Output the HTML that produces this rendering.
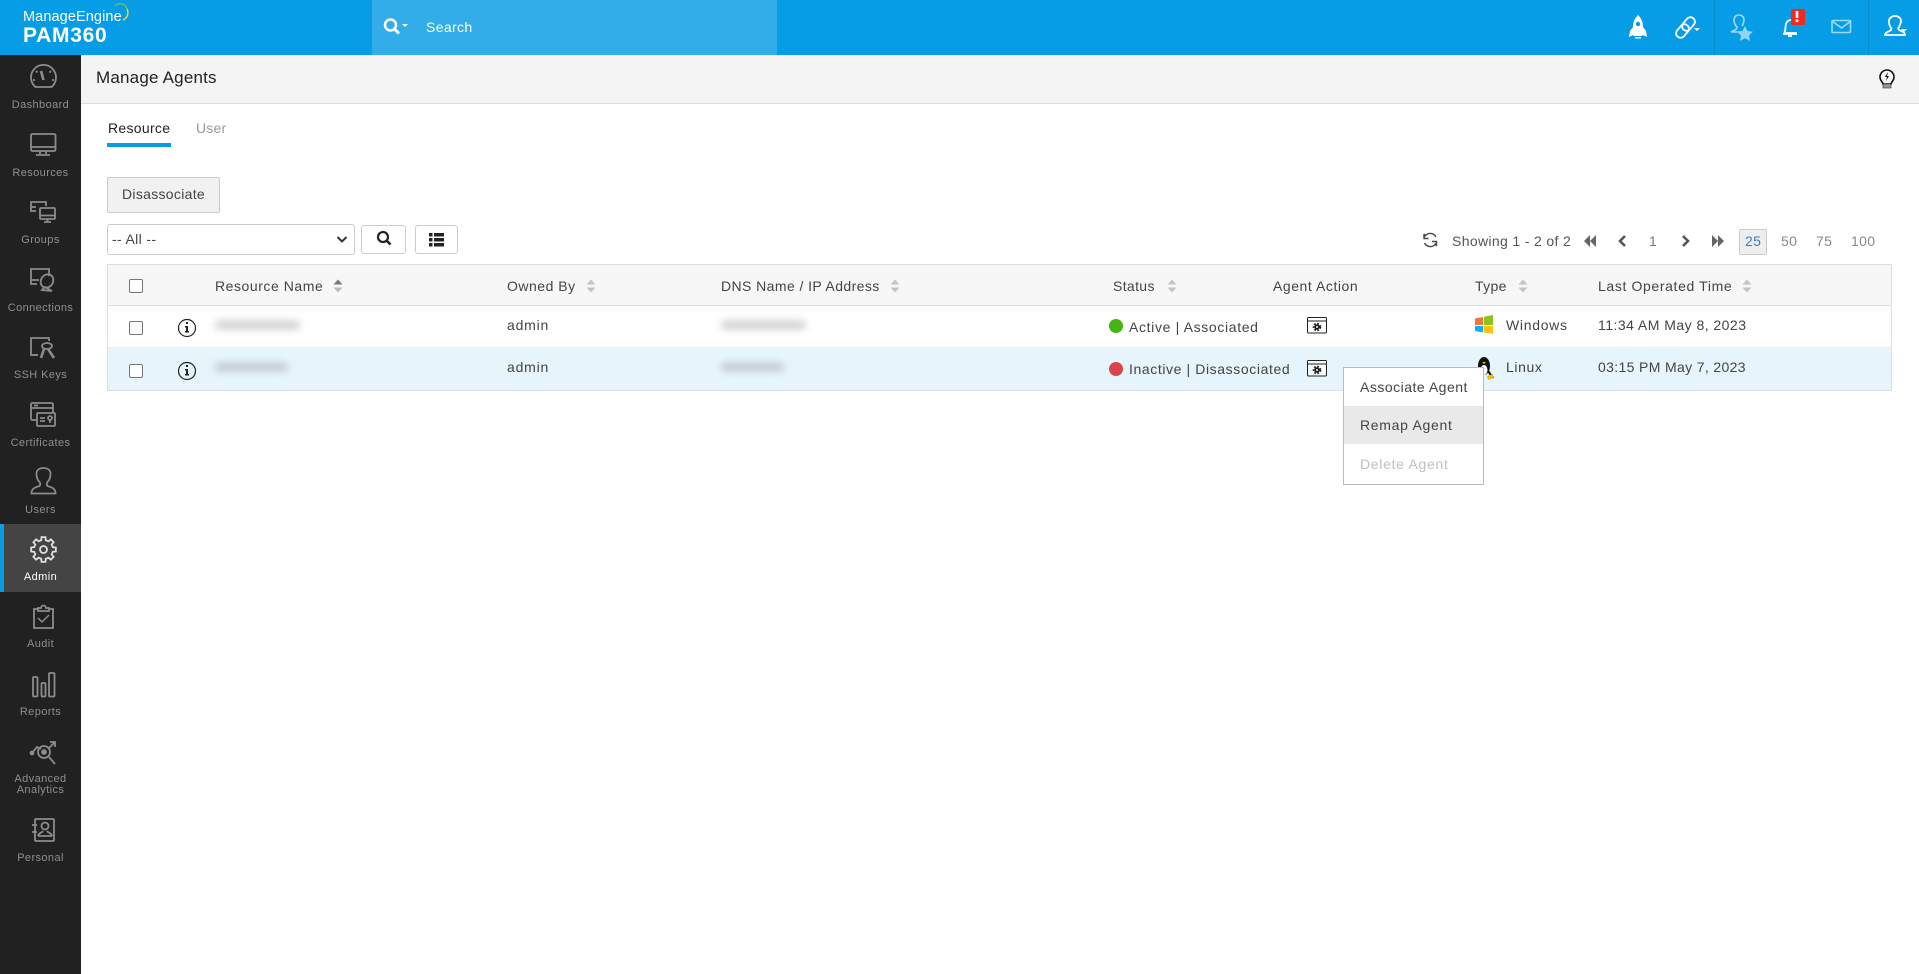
<!DOCTYPE html>
<html><head><meta charset="utf-8"><title>Manage Agents</title>
<style>
html,body{margin:0;padding:0;width:1919px;height:974px;overflow:hidden;background:#fff;font-family:"Liberation Sans",sans-serif;font-size:14px;color:#333}
.a{position:absolute;white-space:nowrap;line-height:18px;letter-spacing:.35px}
.b{position:absolute}
.nav{position:absolute;left:0;width:81px;text-align:center;font-size:11px;color:#8f8f8f;line-height:11px;letter-spacing:.4px}
.blur{position:absolute;height:8px;background:#999;filter:blur(4px);opacity:.5;border-radius:4px}
.cb{position:absolute;left:129px;width:12px;height:12px;border:1px solid #777;border-radius:2px;background:#fff}
svg{position:absolute;left:0;top:0}
</style></head><body>
<div class="b" style="left:0;top:0;width:1919px;height:55px;background:#069de6"></div>
<div class="b" style="left:372px;top:0;width:405px;height:55px;background:#33ade9"></div>
<div class="b" style="left:1714px;top:0;width:1px;height:55px;background:#0a8ccc"></div>
<div class="b" style="left:1868px;top:0;width:1px;height:55px;background:#0a8ccc"></div>
<div class="b" style="left:0;top:55px;width:81px;height:919px;background:#212121"></div>
<div class="b" style="left:0;top:524px;width:81px;height:68px;background:#444"></div>
<div class="b" style="left:0;top:524px;width:4px;height:68px;background:#069de6"></div>
<div class="b" style="left:81px;top:55px;width:1838px;height:48px;background:#f4f4f4;border-bottom:1px solid #ddd"></div>

<div class="a" style="left:23px;top:8px;color:#fff;font-size:14.5px;letter-spacing:.1px">ManageEngine</div>
<div class="a" style="left:23px;top:25px;color:#fff;font-size:21px;font-weight:bold;line-height:22px;letter-spacing:.7px">PAM360</div>
<div class="a" style="left:426px;top:18px;color:#fff;font-size:14px">Search</div>

<div class="nav" style="top:100px">Dashboard</div>
<div class="nav" style="top:168px">Resources</div>
<div class="nav" style="top:235px">Groups</div>
<div class="nav" style="top:303px">Connections</div>
<div class="nav" style="top:370px">SSH Keys</div>
<div class="nav" style="top:438px">Certificates</div>
<div class="nav" style="top:505px">Users</div>
<div class="nav" style="top:572px;color:#fff">Admin</div>
<div class="nav" style="top:639px">Audit</div>
<div class="nav" style="top:707px">Reports</div>
<div class="nav" style="top:774px">Advanced<br>Analytics</div>
<div class="nav" style="top:853px">Personal</div>

<div class="a" style="left:96px;top:69px;font-size:17px;color:#222;letter-spacing:.2px">Manage Agents</div>
<div class="a" style="left:108px;top:119px;color:#222;letter-spacing:.3px">Resource</div>
<div class="a" style="left:196px;top:119px;color:#999;letter-spacing:.2px">User</div>
<div class="b" style="left:107px;top:143px;width:64px;height:4px;background:#069de6"></div>

<div class="b" style="left:107px;top:177px;width:111px;height:34px;background:#f1f1f1;border:1px solid #ccc;border-radius:2px"></div>
<div class="a" style="left:122px;top:185px;color:#444;letter-spacing:.3px">Disassociate</div>
<div class="b" style="left:107px;top:224px;width:246px;height:29px;border:1px solid #ccc;border-radius:3px;background:#fff"></div>
<div class="a" style="left:112px;top:230px;color:#444">-- All --</div>
<div class="b" style="left:361px;top:225px;width:43px;height:27px;border:1px solid #ccc;border-radius:3px"></div>
<div class="b" style="left:415px;top:225px;width:41px;height:27px;border:1px solid #ccc;border-radius:3px"></div>

<div class="a" style="left:1452px;top:232px;color:#555">Showing 1 - 2 of 2</div>
<div class="a" style="left:1649px;top:232px;color:#777">1</div>
<div class="b" style="left:1739px;top:229px;width:26px;height:24px;background:#eee;border:1px solid #ccc;border-radius:2px"></div>
<div class="a" style="left:1745px;top:232px;color:#3d7fc4">25</div>
<div class="a" style="left:1781px;top:232px;color:#888">50</div>
<div class="a" style="left:1816px;top:232px;color:#888">75</div>
<div class="a" style="left:1851px;top:232px;color:#888">100</div>

<div class="b" style="left:107px;top:264px;width:1783px;height:40px;background:#f7f7f7;border:1px solid #ddd"></div>
<div class="b" style="left:107px;top:306px;width:1783px;height:41px;background:#fff;border-left:1px solid #ddd;border-right:1px solid #ddd;border-bottom:1px solid #eee"></div>
<div class="b" style="left:107px;top:348px;width:1783px;height:42px;background:#e6f4fc;border:1px solid #d5dfe5;border-top:0"></div>

<div class="cb" style="top:279px"></div><div class="cb" style="top:321px"></div><div class="cb" style="top:364px"></div>

<div class="a" style="left:215px;top:277px;color:#444;letter-spacing:.55px">Resource Name</div>
<div class="a" style="left:507px;top:277px;color:#444;letter-spacing:.5px">Owned By</div>
<div class="a" style="left:721px;top:277px;color:#444;letter-spacing:.42px">DNS Name / IP Address</div>
<div class="a" style="left:1113px;top:277px;color:#444">Status</div>
<div class="a" style="left:1273px;top:277px;color:#444;letter-spacing:.55px">Agent Action</div>
<div class="a" style="left:1475px;top:277px;color:#444">Type</div>
<div class="a" style="left:1598px;top:277px;color:#444;letter-spacing:.63px">Last Operated Time</div>

<div class="blur" style="left:215px;top:321px;width:85px"></div>
<div class="blur" style="left:215px;top:363px;width:73px"></div>
<div class="blur" style="left:721px;top:321px;width:85px"></div>
<div class="blur" style="left:721px;top:363px;width:63px"></div>

<div class="a" style="left:507px;top:316px;color:#444;letter-spacing:.8px">admin</div>
<div class="a" style="left:507px;top:358px;color:#444;letter-spacing:.8px">admin</div>
<div class="b" style="left:1109px;top:319px;width:14px;height:14px;border-radius:50%;background:#44b512"></div>
<div class="b" style="left:1109px;top:362px;width:14px;height:14px;border-radius:50%;background:#d9454c"></div>
<div class="a" style="left:1129px;top:318px;color:#444;letter-spacing:.65px">Active | Associated</div>
<div class="a" style="left:1129px;top:360px;color:#444;letter-spacing:.6px">Inactive | Disassociated</div>
<div class="a" style="left:1506px;top:316px;color:#444;letter-spacing:.7px">Windows</div>
<div class="a" style="left:1506px;top:358px;color:#444;letter-spacing:.6px">Linux</div>
<div class="a" style="left:1598px;top:316px;color:#444;letter-spacing:.47px">11:34 AM May 8, 2023</div>
<div class="a" style="left:1598px;top:358px;color:#444;letter-spacing:.35px">03:15 PM May 7, 2023</div>

<svg width="1919" height="974" viewBox="0 0 1919 974" fill="none">
<defs><path id="t" d="M-3.64-8.78L-2.3-9.22L-1.96-12.35L1.96-12.35L2.3-9.22L3.64-8.78"/></defs>
<!-- logo swoosh -->
<path d="M115 6a7 7 0 0 1 12 3" stroke="#7fc241" stroke-width="1.2"/><path d="M127 9a8 8 0 0 1-4 11" stroke="#f0d040" stroke-width="1.5"/>
<!-- search -->
<circle cx="390.500" cy="25" r="5.500" stroke="#fff" stroke-width="2.500"/><path d="M394.500 29l4.500 4.500" stroke="#fff" stroke-width="3"/><path d="M402 24h6l-3 3z" fill="#fff"/>
<!-- sidebar icons -->
<g stroke="#8c8c8c" stroke-width="1.800">
<path d="M35.500 87h16a12.500 12.500 0 1 0-16 0z"/>
<path d="M41 71l2.500 9" stroke-width="2.600"/><path d="M33 80h2M52 80h2M36 71l1.500 1.500M51 71l-1.500 1.500"/>
<rect x="31" y="134" width="24.500" height="17" rx="1.500"/><path d="M31 147h24.500M40 151v3M46 151v3M36 155h14"/>
<path d="M36 211h-5v-9h15v4"/><path d="M31 207h5"/><rect x="40" y="208" width="15" height="11" rx="1"/><path d="M40 215.500h15M44 222h7M47.500 219v3"/>
<path d="M37 284h-6v-15h18v7"/><path d="M31 280h8"/><ellipse cx="47" cy="281" rx="6" ry="7" transform="rotate(35 47 281)"/><path d="M42 290l3-3 7 4z"/>
<path d="M37 355h-6v-17h18v3"/><path d="M38 355h-4"/><ellipse cx="47" cy="346" rx="5" ry="3"/><path d="M44 349l-3 9M48 349l6 9" stroke-width="2.600"/>
<rect x="31" y="403" width="22" height="17" rx="1.500"/><path d="M31 408h22M34 405.500h4"/><rect x="37" y="413" width="18" height="13" rx="1" fill="#212121"/><path d="M40 418h5M40 421h5"/><circle cx="50" cy="418" r="2"/><path d="M50 420v3"/>
<path d="M31.500 493c0-5 5-6 8-7 1-1 1-3 0-4-2-2-3-5-3-8 0-4 3-6 7-6s7 2 7 6c0 3-1 6-3 8-1 1-1 3 0 4 3 1 8 2 8 7v.500H31.500z"/>
</g>
<g stroke="#e0e0e0" stroke-width="1.800" transform="translate(43.500 549.500)">
<circle r="3.500"/>
<use href="#t"/><use href="#t" transform="rotate(45)"/><use href="#t" transform="rotate(90)"/><use href="#t" transform="rotate(135)"/><use href="#t" transform="rotate(180)"/><use href="#t" transform="rotate(225)"/><use href="#t" transform="rotate(270)"/><use href="#t" transform="rotate(315)"/>
</g>
<g stroke="#8c8c8c" stroke-width="1.800">
<path d="M39 609h-5v19h19v-19h-5"/><path d="M38 611v-3h3a2.500 2.500 0 0 1 5 0h3v3z"/><path d="M38 618l4 4 7-7" stroke-width="1.500"/>
<rect x="33" y="677" width="4.500" height="19.500" rx="1"/><rect x="41.500" y="683" width="4" height="13.500" rx="1"/><rect x="49" y="673" width="5.500" height="23.500" rx="1"/>
<circle cx="44" cy="752" r="6"/><path d="M49 757l6 7M32 753l5-6 4 2M48 749l7-7M50 742h5v5"/><circle cx="44" cy="752" r="2" fill="#8c8c8c"/><circle cx="32" cy="753" r="1.500" fill="#8c8c8c"/>
<rect x="35" y="819" width="19" height="22" rx="1"/><path d="M32 825h5M32 832h5"/><circle cx="45" cy="826" r="3.500"/><path d="M38 836c0-3 4-3 5-5M52 836c0-3-4-3-5-5M38 836h14"/>
</g>
<!-- header icons -->
<path d="M1638 15c4 4 5 8 5 12l3 4 1 6-4-2-1 1h-8l-1-1-4 2 1-6 3-4c0-4 1-8 5-12z" fill="#fff"/><circle cx="1638" cy="24" r="2.200" fill="#069de6"/><path d="M1635 37h6v1.500h-6z" fill="#fff"/>
<g stroke="#fff" stroke-width="1.800"><rect x="1684" y="16.500" width="9" height="15" rx="4.500" transform="rotate(40 1688.500 24)"/><rect x="1678" y="23.500" width="9" height="15" rx="4.500" transform="rotate(40 1682.500 31)"/></g><path d="M1694 28h6l-3 3z" fill="#fff"/>
<g stroke="#9ddcf8" stroke-width="1.600"><path d="M1731 32c3-2 6-2 6-5-2-2-3-4-3-7 0-3 2-5 5-5s5 2 5 5c0 3-1 4-2 6M1731 32h10"/></g><path d="M1745 26l2.500 5 5.500.7-4 3.800 1 5.500-5-2.700-5 2.700 1-5.500-4-3.800 5.500-.7z" fill="#8fd6f6"/>
<path d="M1784 33c2-2 1-6 2-9 1-3 3-4 5-4M1784 33h13" stroke="#fff" stroke-width="1.800"/><path d="M1783 34h14M1788 36h4" stroke="#fff" stroke-width="1.800"/><rect x="1791" y="9" width="14" height="16" rx="1" fill="#f02a20"/><rect x="1795.700" y="11" width="2.600" height="7" fill="#fff"/><rect x="1795.700" y="19.500" width="2.600" height="2.600" fill="#fff"/>
<rect x="1832" y="20.500" width="18.500" height="12" rx="1" stroke="#9ddcf8" stroke-width="1.600"/><path d="M1832 21l9.500 7 9.500-7" stroke="#9ddcf8" stroke-width="1.600"/>
<path d="M1885 35c0-3 4-3 6-5 1-1 0-2-1-4-1-1-1-3-1-5 0-3 3-5 6-5s6 2 6 5c0 2-1 4-2 6-1 1-1 2 0 3 2 1 6 2 6 5v0z" stroke="#fff" stroke-width="1.800"/><path d="M1901 29h6l-3 3z" fill="#fff"/>
<!-- bulb -->
<path d="M1883 84c0-2-3-3-3-7a7 7 0 1 1 14 0c0 4-3 5-3 7z" stroke="#111" stroke-width="1.600"/><rect x="1883" y="84" width="8" height="4" fill="#999" stroke="#333" stroke-width=".6"/><path d="M1888 72l-3 5h2l-1 4 3-5h-2z" fill="#111"/>
<!-- select arrow -->
<path d="M337.500 237l4.500 4.500 4.500-4.500" stroke="#333" stroke-width="2"/>
<!-- search btn -->
<circle cx="383" cy="237" r="5" stroke="#222" stroke-width="2.200"/><path d="M386.500 240.500l4 4" stroke="#222" stroke-width="2.600"/>
<!-- list btn -->
<path d="M429 233h3.500v3.500H429zM429 238h3.500v3.500H429zM429 243h3.500v3.500H429zM434 233h10v3.500h-10zM434 238h10v3.500h-10zM434 243h10v3.500h-10z" fill="#222"/>
<!-- pagination -->
<path d="M1436 237a6.500 6.500 0 0 0-11-1l-1-2v4.500h4.500M1424.500 243a6.500 6.500 0 0 0 11 1l1 2v-4.500H1432" stroke="#444" stroke-width="1.400"/>
<path d="M1590 235l-6 6 6 6zM1596 235l-6 6 6 6z" fill="#666"/>
<path d="M1625 236l-5 5 5 5" stroke="#555" stroke-width="2.600"/>
<path d="M1683 236l5 5-5 5" stroke="#555" stroke-width="2.600"/>
<path d="M1712 235l6 6-6 6zM1718 235l6 6-6 6z" fill="#666"/>
<!-- sort -->
<path d="M333.500 284.500l4.500-5 4.500 5z" fill="#777"/><path d="M333.500 287.500l4.500 5 4.500-5z" fill="#bbb"/>
<g fill="#c4c4c4"><path d="M586.500 284.500l4.500-5 4.500 5zM586.500 287.500l4.500 5 4.500-5zM890.500 284.500l4.500-5 4.500 5zM890.500 287.500l4.500 5 4.500-5zM1167.500 284.500l4.500-5 4.500 5zM1167.500 287.500l4.500 5 4.500-5zM1518.500 284.500l4.500-5 4.500 5zM1518.500 287.500l4.500 5 4.500-5zM1742.500 284.500l4.500-5 4.500 5zM1742.500 287.500l4.500 5 4.500-5z"/></g>
<!-- info -->
<g stroke="#222" stroke-width="1.200"><circle cx="187" cy="328" r="8.500"/><circle cx="187" cy="371" r="8.500"/></g>
<g fill="#222"><path d="M186 322h2v2h-2zM185 326h3v5h1v1.500h-4V331h1v-3.500h-1zM186 365h2v2h-2zM185 369h3v5h1v1.500h-4V374h1v-3.500h-1z"/></g>
<!-- gear action -->
<g stroke="#222" stroke-width="1"><rect x="1307.500" y="317.500" width="19" height="15.500" rx="1" fill="#fff"/><path d="M1307.500 321h19"/><rect x="1307.500" y="360.500" width="19" height="15.500" rx="1" fill="#f4f9fc"/><path d="M1307.500 364h19"/></g>
<g stroke="#222" stroke-width="3" stroke-dasharray="1.400 1.200"><circle cx="1317" cy="327" r="2.800"/><circle cx="1317" cy="370" r="2.800"/></g>
<circle cx="1317" cy="327" r="2.800" fill="#222"/><circle cx="1317" cy="370" r="2.800" fill="#222"/><circle cx="1317" cy="327" r="1" fill="#fff"/><circle cx="1317" cy="370" r="1" fill="#fff"/>
<!-- windows -->
<path d="M1475 318.500l8-1.500v8h-8z" fill="#f4743a"/><path d="M1484 316.800l9-1.800v10h-9z" fill="#8cc21c"/><path d="M1475 326h8v6.500l-8-1.500z" fill="#0cb0ef"/><path d="M1484 326h9v8l-9-1.500z" fill="#fdc20d"/>
<!-- linux -->
<ellipse cx="1484" cy="366" rx="6" ry="9" fill="#111"/><ellipse cx="1484" cy="370" rx="3.500" ry="5" fill="#fff"/><path d="M1480 372l-2 6M1488 371l5 7" stroke="#111" stroke-width="2.200"/><path d="M1487 376l6-2v4l-5 2z" fill="#f0b91c"/><path d="M1482 362h4l-2 2z" fill="#f0b91c"/>
</svg>

<div class="b" style="left:1343px;top:367px;width:139px;height:116px;background:#fff;border:1px solid #bbb"></div>
<div class="b" style="left:1344px;top:406px;width:139px;height:38px;background:#e9e9e9"></div>
<div class="a" style="left:1360px;top:378px;color:#444;letter-spacing:.5px">Associate Agent</div>
<div class="a" style="left:1360px;top:416px;color:#444;letter-spacing:.7px">Remap Agent</div>
<div class="a" style="left:1360px;top:455px;color:#c0c0c0;letter-spacing:.7px">Delete Agent</div>
</body></html>
